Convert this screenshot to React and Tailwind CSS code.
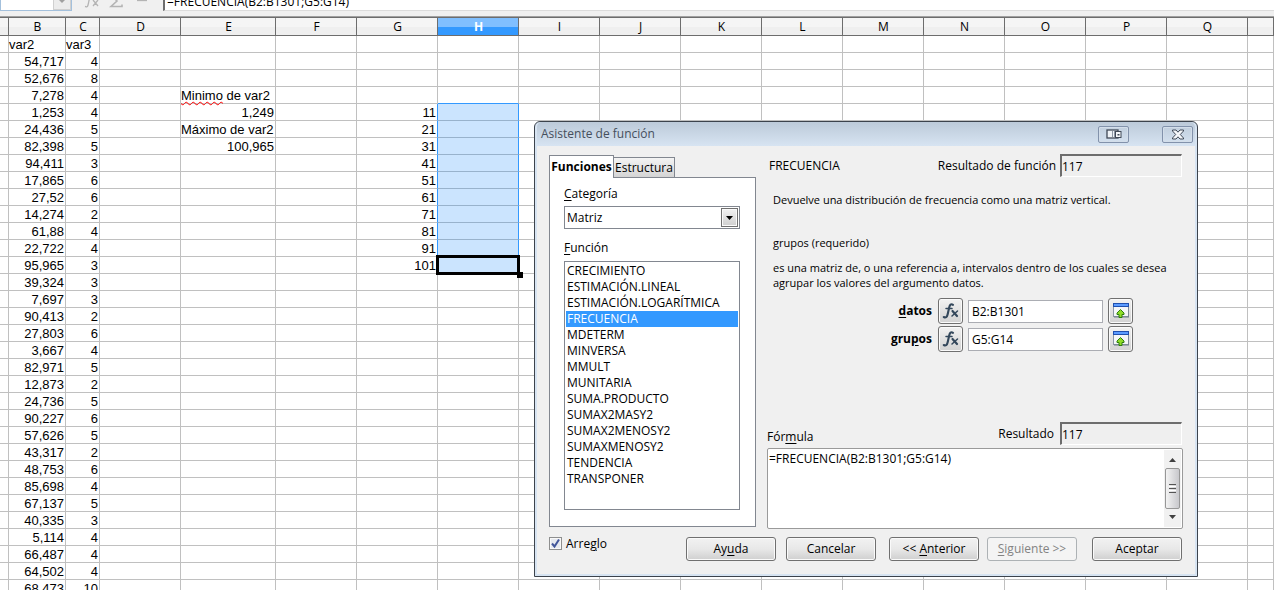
import React, { useState } from "react";

const COLUMNS = [
  { name: "", width: "w-[9px]" },
  { name: "B", width: "w-[57px]" },
  { name: "C", width: "w-[34px]" },
  { name: "D", width: "w-[81px]" },
  { name: "E", width: "w-[95px]" },
  { name: "F", width: "w-[81px]" },
  { name: "G", width: "w-[81px]" },
  { name: "H", width: "w-[81px]" },
  { name: "I", width: "w-[81px]" },
  { name: "J", width: "w-[81px]" },
  { name: "K", width: "w-[81px]" },
  { name: "L", width: "w-[81px]" },
  { name: "M", width: "w-[81px]" },
  { name: "N", width: "w-[81px]" },
  { name: "O", width: "w-[81px]" },
  { name: "P", width: "w-[81px]" },
  { name: "Q", width: "w-[81px]" },
  { name: "", width: "" },
];

const VAR2 = [
  "var2", "54,717", "52,676", "7,278", "1,253", "24,436", "82,398", "94,411", "17,865",
  "27,52", "14,274", "61,88", "22,722", "95,965", "39,324", "7,697", "90,413", "27,803",
  "3,667", "82,971", "12,873", "24,736", "90,227", "57,626", "43,317", "48,753", "85,698",
  "67,137", "40,335", "5,114", "66,487", "64,502", "68,473",
];

const VAR3 = [
  "var3", "4", "8", "4", "4", "5", "5", "3", "6", "6", "2", "4", "4", "3", "3", "3", "2",
  "6", "4", "5", "2", "5", "6", "5", "2", "6", "4", "5", "3", "4", "4", "4", "10",
];

const COLUMN_E = { 4: "Minimo de var2", 5: "1,249", 6: "Máximo de var2", 7: "100,965" };

const FUNCTIONS = [
  "CRECIMIENTO", "ESTIMACIÓN.LINEAL", "ESTIMACIÓN.LOGARÍTMICA", "FRECUENCIA", "MDETERM",
  "MINVERSA", "MMULT", "MUNITARIA", "SUMA.PRODUCTO", "SUMAX2MASY2", "SUMAX2MENOSY2",
  "SUMAXMENOSY2", "TENDENCIA", "TRANSPONER",
];

function cellValue(column, row) {
  if (column === "B") return VAR2[row - 1];
  if (column === "C") return VAR3[row - 1];
  if (column === "E") return COLUMN_E[row] ?? "";
  if (column === "G" && row >= 5 && row <= 14) return String((row - 4) * 10 + 1);
  return "";
}

function cellStyle(column, row) {
  const inRange = row >= 5 && row <= 14;
  if (column === "H" && inRange) return "bg-[#cbe4fe] border-r-[#3399ff] border-b-[#98b2cc]";
  if (column === "G" && inRange) return "border-r-[#3399ff] border-b-[#c0c0c0]";
  if (column === "H" && row === 4) return "border-r-[#c0c0c0] border-b-[#3399ff]";
  return "border-r-[#c0c0c0] border-b-[#c0c0c0]";
}

function Cell({ column, row }) {
  const value = cellValue(column, row);
  const align = /^[\d,]+$/.test(value) ? "pr-px text-right" : "text-left";
  const active = column === "H" && row === 14;
  return (
    <td
      className={`h-[17px] border-r border-b p-0 pt-0.5 leading-[14px] whitespace-nowrap ${align} ${cellStyle(column, row)} ${active ? "relative" : ""}`}
    >
      {column === "E" && row === 4 ? (
        <>
          <span className="underline decoration-[#ff0000] decoration-wavy decoration-1 underline-offset-1">Minimo</span>
          {" de var2"}
        </>
      ) : (
        value
      )}
      {active && (
        <>
          <span className="absolute -top-0.5 -right-0.5 -bottom-0.5 -left-0.5 border-3 border-black" />
          <span className="absolute -right-[5px] -bottom-[5px] size-1.5 bg-black" />
        </>
      )}
    </td>
  );
}

function Sheet() {
  return (
    <table className="w-full table-fixed border-separate border-spacing-0 font-['Liberation_Sans',Arial,sans-serif] text-[13px] text-black">
      <colgroup>
        {COLUMNS.map((c, i) => (
          <col key={i} className={c.width} />
        ))}
      </colgroup>
      <thead>
        <tr>
          {COLUMNS.map((c, i) => (
            <th
              key={i}
              scope="col"
              className={`h-[19px] border-y border-r border-[#6d6d6d] p-0 pl-px font-['Open_Sans','Noto_Sans',sans-serif] text-[12px] leading-4 ${
                c.name === "H"
                  ? "bg-linear-to-b from-[#80bfff] from-50% to-[#3399ff] to-50% font-bold text-white"
                  : "bg-linear-to-b from-[#f5f5f5] from-50% to-[#efefef] to-50% font-normal"
              }`}
            >
              {c.name}
            </th>
          ))}
        </tr>
      </thead>
      <tbody>
        {VAR2.map((_, r) => (
          <tr key={r}>
            {COLUMNS.map((c, i) => (
              <Cell key={i} column={c.name} row={r + 1} />
            ))}
          </tr>
        ))}
      </tbody>
    </table>
  );
}

function FormulaBar() {
  return (
    <div className="flex h-[17px] items-end overflow-hidden border-b border-[#a0a0a0] bg-[#f0f0f0] pb-[5px] text-[12px]">
      <div className="flex h-6 w-[72px] justify-end border border-[#a3c0dc] bg-white">
        <button aria-label="Cuadro de nombre" className="flex w-[18px] items-end justify-center border border-[#d0d0d0] bg-[#ececec] pb-1.5">
          <svg className="h-1 w-2" viewBox="0 0 8 4"><path d="M0 0h8L4 4z" fill="#a0a0a0" /></svg>
        </button>
      </div>
      <svg className="ml-3 h-4 w-16" viewBox="0 0 64 16" fill="none" stroke="#b4b4b4">
        <path d="M9 -1C6 -1 5.500 3 4.500 8S3 12 1 11.500M3 4h6M9 5l5 6M14 5l-5 6" strokeWidth="1.300" />
        <path d="M38 1h-10l5 5-6 5.500h11v-2" strokeWidth="1.600" />
        <path d="M53 5.500h10" strokeWidth="1.300" />
      </svg>
      <input
        aria-label="Línea de entrada"
        defaultValue="=FRECUENCIA(B2:B1301;G5:G14)"
        className="ml-[15px] h-6 min-w-0 flex-1 border-b border-l-2 border-b-[#dcdcdc] border-l-[#6d6d6d] bg-white pt-1.5 pl-0.5 outline-none"
      />
    </div>
  );
}

const BUTTON =
  "h-6 w-[90px] rounded-[3px] border border-[#707070] bg-linear-to-b from-[#f2f2f2] via-[#e8e8e8] via-50% to-[#cfcfcf] shadow-[inset_0_0_0_1px_#fafafa]";

function Key({ children }) {
  return <span className="underline underline-offset-2">{children}</span>;
}

function FxIcon() {
  return (
    <svg className="h-4 w-[18px]" viewBox="0 0 18 16" fill="none" stroke="#33475b" strokeLinecap="round">
      <path d="M11 1.800C9 .5 7.800 1.700 7.200 4.500L5.600 11.500C5 14.300 3.600 15 1.800 14" strokeWidth="2.100" />
      <path d="M4 5.500h6" strokeWidth="1.500" />
      <path d="M10.500 8l4.500 5" strokeWidth="2.200" />
      <path d="M15.500 8l-5.500 5" strokeWidth="1.500" />
    </svg>
  );
}

function ShrinkIcon() {
  return (
    <svg className="h-4 w-4" viewBox="0 0 16 16">
      <rect x="0.500" y="1.500" width="15" height="12" fill="#f4f6f8" stroke="#8b97a5" />
      <path d="M1 14h15V4" fill="none" stroke="#6f7b88" />
      <rect x="0" y="0" width="16" height="4" fill="#1f4fae" />
      <rect x="1" y="1" width="14" height="2" fill="#5b9bff" />
      <path d="M7.500 6.500L11 10V11.500H9V14.500H6V11.500H4V10z" fill="#8fdc28" stroke="#2d7d0f" strokeLinejoin="round" />
    </svg>
  );
}

function ArgumentRow({ id, label, value }) {
  const iconButton =
    "flex h-[26px] w-[25px] items-center justify-center rounded-[3px] border border-[#707070] bg-linear-to-b from-[#f2f2f2] to-[#d2d2d2] shadow-[inset_0_0_0_1px_#fafafa]";
  return (
    <div className="flex items-center">
      <label htmlFor={id} className="flex-1 pr-1.5 text-right font-bold">{label}</label>
      <button aria-label={`Función para ${id}`} className={iconButton}><FxIcon /></button>
      <input
        id={id}
        defaultValue={value}
        className="ml-[5px] h-[23px] w-[135px] border border-[#abadb3] bg-white px-[3px] outline-none"
      />
      <button aria-label={`Reducir ${id}`} className={`ml-[5px] ${iconButton}`}><ShrinkIcon /></button>
    </div>
  );
}

function ResultField({ id, label, gap }) {
  return (
    <div className="flex items-center">
      <label htmlFor={id} className={gap}>{label}</label>
      <input
        id={id}
        readOnly
        defaultValue="117"
        className="h-[23px] w-[122px] border-t-2 border-r border-b border-l-2 border-t-[#6d6d6d] border-r-white border-b-white border-l-[#6d6d6d] bg-[#efefef] outline-none"
      />
    </div>
  );
}

function FunctionsPanel({ selected, onSelect }) {
  return (
    <div className="flex w-[207px] flex-col pt-px pb-0.5">
      <div role="tablist" className="flex h-[22px] items-end">
        <button role="tab" aria-selected="true" className="relative z-10 -mb-px h-[23px] w-[65px] border border-b-0 border-[#828790] bg-white font-bold">
          Funciones
        </button>
        <button role="tab" aria-selected="false" className="h-5 w-[61px] border border-b-0 border-l-0 border-[#828790] bg-linear-to-b from-[#f4f4f4] to-[#d4d4d4]">
          Estructura
        </button>
      </div>
      <div className="flex h-[350px] flex-col border border-[#828790] bg-white pt-2 pr-[15px] pb-4 pl-3.5">
        <label htmlFor="categoria" className="h-5 leading-4"><Key>C</Key>ategoría</label>
        <div className="relative">
          <select id="categoria" defaultValue="Matriz" className="block h-[23px] w-full appearance-none border border-[#828790] bg-white pl-0.5 outline-none">
            <option>Matriz</option>
          </select>
          <span className="pointer-events-none absolute top-0.5 right-0.5 flex h-[19px] w-[17px] items-center justify-center border border-[#707070] bg-linear-to-b from-[#f2f2f2] to-[#cfcfcf] shadow-[inset_0_0_0_1px_#fafafa]">
            <svg className="h-1 w-[7px]" viewBox="0 0 7 4"><path d="M0 0h7L3.500 4z" /></svg>
          </span>
        </div>
        <span id="funcion" className="mt-[11px] h-[21px] leading-4"><Key>F</Key>unción</span>
        <ul role="listbox" aria-labelledby="funcion" className="flex-1 border border-[#828790] p-px">
          {FUNCTIONS.map((name) => (
            <li
              key={name}
              role="option"
              aria-selected={name === selected}
              onClick={() => onSelect(name)}
              className={`h-4 pl-px leading-4 ${name === selected ? "bg-[#3399ff] text-white" : ""}`}
            >
              {name}
            </li>
          ))}
        </ul>
      </div>
    </div>
  );
}

function FormulaBox() {
  return (
    <div className="flex h-[81px] rounded-[2px] border border-[#9a9a9a] bg-white p-px">
      <textarea
        id="formula"
        defaultValue="=FRECUENCIA(B2:B1301;G5:G14)"
        className="min-w-0 flex-1 resize-none overflow-hidden pt-px leading-4 outline-none"
      />
      <div className="flex w-[17px] flex-col items-center justify-between bg-[#f1f1f1] py-2">
        <svg className="h-1 w-[7px]" viewBox="0 0 7 4"><path d="M0 4h7L3.500 0z" fill="#404040" /></svg>
        <span className="flex h-[41px] w-[15px] flex-col items-center justify-center gap-px rounded-[2px] border border-[#979797] bg-linear-to-r from-[#f3f3f3] to-[#c8c8cc]">
          <span className="h-px w-[7px] bg-[#555]" />
          <span className="h-px w-[7px] bg-white" />
          <span className="h-px w-[7px] bg-[#555]" />
          <span className="h-px w-[7px] bg-white" />
          <span className="h-px w-[7px] bg-[#555]" />
        </span>
        <svg className="h-1 w-[7px]" viewBox="0 0 7 4"><path d="M0 0h7L3.500 4z" fill="#404040" /></svg>
      </div>
    </div>
  );
}

function TitleBar() {
  const frame = "flex h-[17px] w-[31px] items-center justify-center rounded-[2px] border border-[#8292ab] shadow-[inset_0_0_0_1px_#d3deea]";
  return (
    <div className="flex h-6 items-center rounded-t-[5px] bg-linear-to-b from-[#bccad9] to-[#d7e4f2] pr-0.5 pl-1">
      <h1 className="flex-1 text-[#454f5c]">Asistente de función</h1>
      <button aria-label="Acoplar" className={`mr-[33px] ${frame}`}>
        <svg className="h-[11px] w-4" viewBox="0 0 16 11" fill="none">
          <rect x="1" y="1" width="11" height="8" fill="#eef2f6" stroke="#3f4856" strokeWidth="1.300" />
          <path d="M6.500 2v6M8.500 2v6" stroke="#8c96a4" />
          <rect x="9.500" y="2.500" width="5.500" height="6" fill="#f5f7fa" stroke="#3f4856" />
          <rect x="11.500" y="5" width="2" height="1.500" fill="#3f4856" />
        </svg>
      </button>
      <button aria-label="Cerrar" className={frame}>
        <svg className="h-[11px] w-3" viewBox="0 0 12 11">
          <path
            d="M0.500 1h3.500l2 2.200L8 1h3.500v1L8.300 5.500 11.500 9v1H8L6 7.800 4 10H0.500V9L3.700 5.500 0.500 2z"
            fill="#f5f7fa"
            stroke="#3f4856"
          />
        </svg>
      </button>
    </div>
  );
}

function FunctionWizard() {
  const [selected, setSelected] = useState("FRECUENCIA");
  return (
    <section
      role="dialog"
      aria-label="Asistente de función"
      className="absolute top-[121px] left-[534px] w-[664px] rounded-t-[6px] border border-[#3c434c] bg-[#d7e4f2] px-0.5 pb-0.5"
    >
      <TitleBar />
      <div className="bg-[#f0f0f0] px-3 pt-2 pb-[13px]">
        <div className="flex gap-[11px]">
          <FunctionsPanel selected={selected} onSelect={setSelected} />
          <div className="flex min-w-0 flex-1 flex-col">
            <div className="flex items-center justify-between pr-px pl-0.5">
              <span>FRECUENCIA</span>
              <ResultField id="resultado-funcion" label="Resultado de función" gap="mr-1" />
            </div>
            <div className="mt-[15px] px-1.5 text-[11px] leading-[15px]">
              <p>Devuelve una distribución de frecuencia como una matriz vertical.</p>
              <p className="mt-7">grupos (requerido)</p>
              <p className="mt-2.5">
                es una matriz de, o una referencia a, intervalos dentro de los cuales se desea
                <br />
                agrupar los valores del argumento datos.
              </p>
            </div>
            <div className="mt-2 flex flex-col gap-0.5 pr-[50px]">
              <ArgumentRow id="datos" label={<><Key>d</Key>atos</>} value="B2:B1301" />
              <ArgumentRow id="grupos" label={<>gru<Key>p</Key>os</>} value="G5:G14" />
            </div>
            <div className="mt-auto mb-[3px] flex items-end justify-between pr-px">
              <label htmlFor="formula" className="leading-4">Fór<Key>m</Key>ula</label>
              <ResultField id="resultado" label="Resultado" gap="mr-1.5" />
            </div>
            <FormulaBox />
          </div>
        </div>
        <div className="mt-2 flex items-start pr-px">
          <label className="mr-auto flex items-center gap-1">
            <span className="relative flex size-[13px]">
              <input type="checkbox" defaultChecked className="peer size-[13px] appearance-none border border-[#8e8f8f] bg-[#e6e9ef] shadow-[inset_0_0_0_1px_#f8f8f8]" />
              <svg className="pointer-events-none absolute inset-0 hidden size-[13px] peer-checked:block" viewBox="0 0 13 13" fill="none" stroke="#42569a" strokeWidth="2">
                <path d="M3 6.500L5.500 9.500L10 2.500" />
              </svg>
            </span>
            <span className="leading-[13px]">Arre<Key>g</Key>lo</span>
          </label>
          <button className={`mr-2.5 ${BUTTON}`}>Ay<Key>u</Key>da</button>
          <button className={`mr-[13px] ${BUTTON}`}>Cancelar</button>
          <button className={`mr-2 ${BUTTON}`}>&lt;&lt; <Key>A</Key>nterior</button>
          <button disabled className="mr-[15px] h-6 w-[90px] rounded-[3px] border border-[#adb2b5] bg-[#f4f4f4] text-[#838383]">
            <Key>S</Key>iguiente &gt;&gt;
          </button>
          <button className={BUTTON}>Aceptar</button>
        </div>
      </div>
    </section>
  );
}

export default function App() {
  return (
    <main className="relative h-screen overflow-hidden bg-white font-['Open_Sans','Noto_Sans',sans-serif] text-[12px] text-black">
      <FormulaBar />
      <Sheet />
      <FunctionWizard />
    </main>
  );
}
